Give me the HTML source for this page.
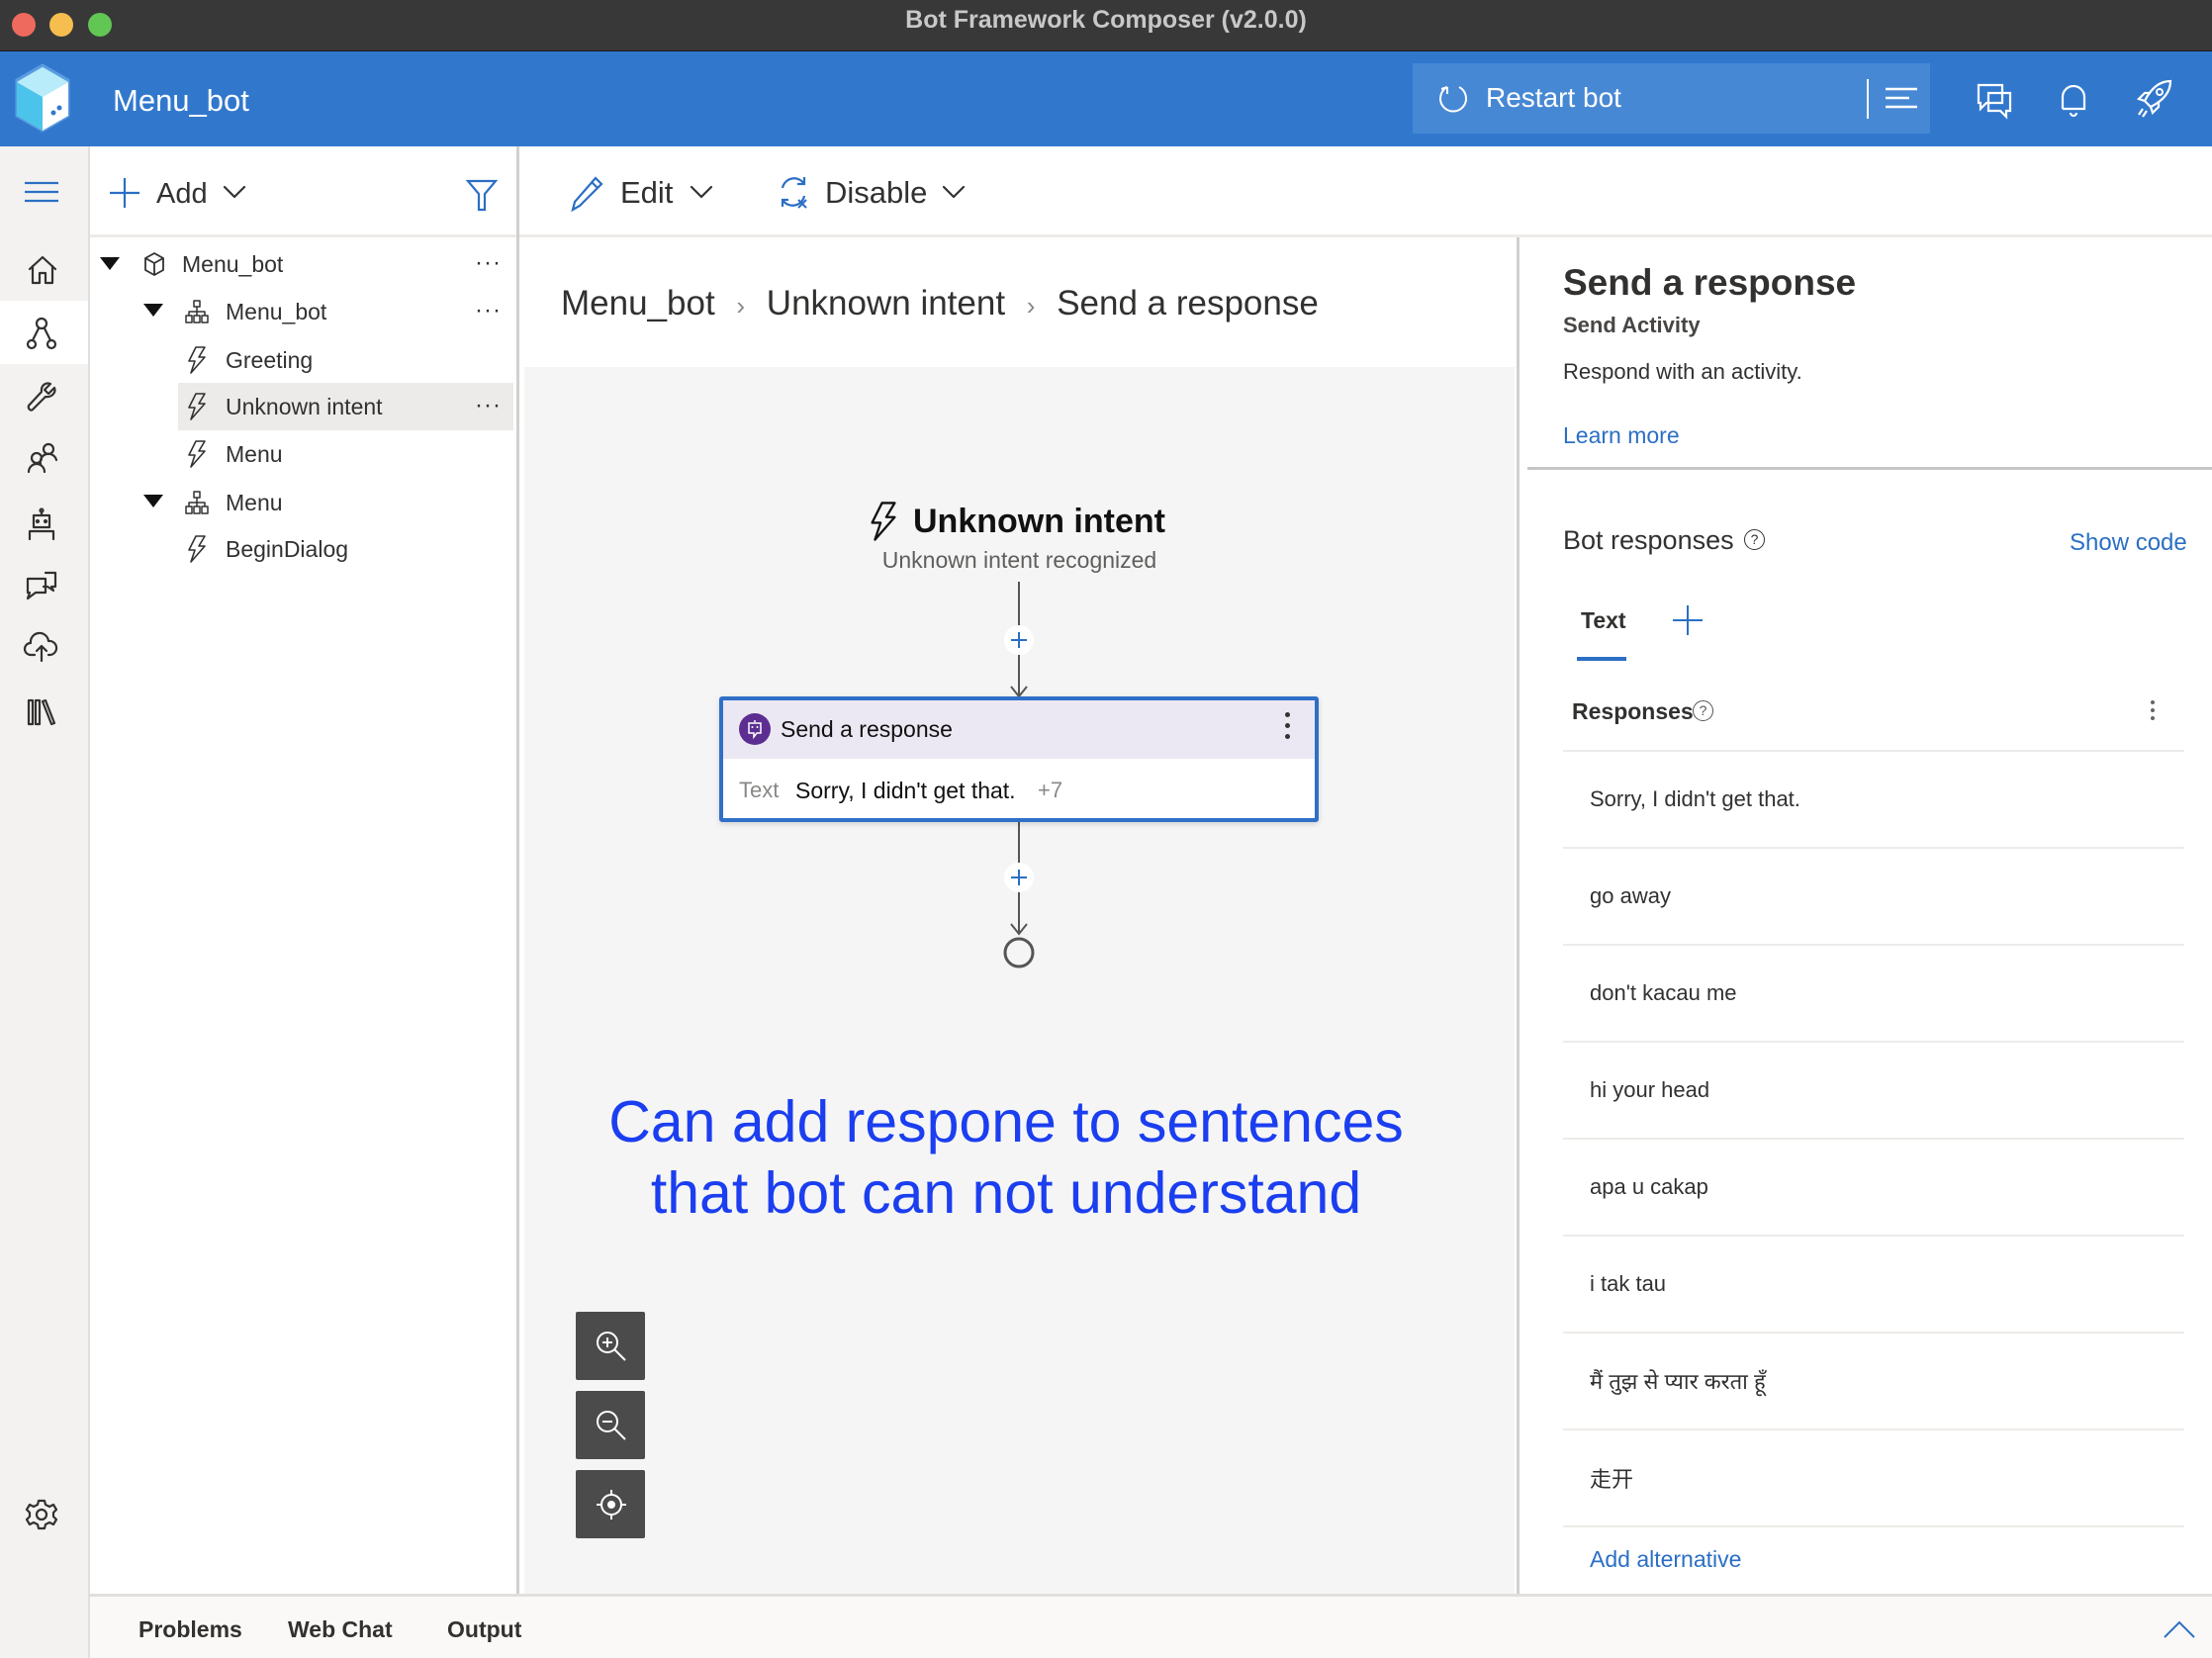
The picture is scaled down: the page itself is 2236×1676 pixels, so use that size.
<!DOCTYPE html>
<html><head><meta charset="utf-8">
<style>
*{margin:0;padding:0;box-sizing:border-box}
body{width:2236px;height:1676px;position:relative;overflow:hidden;background:#fff;font-family:"Liberation Sans","Noto Sans CJK SC",sans-serif;color:#323130}
.a{position:absolute;white-space:nowrap}
svg{position:absolute;overflow:visible}
.ico{fill:none;stroke:#323130;stroke-width:2.2;stroke-linecap:round;stroke-linejoin:round}
.resp{position:absolute;left:1580px;width:628px;height:98px;border-bottom:2px solid #edebe9}
.resp span{position:absolute;left:27px;top:50%;transform:translateY(-50%);font-size:22px;color:#323130}
.zb{position:absolute;left:582px;width:70px;height:69px;background:#4b4b4b;border-radius:2px}
</style></head><body>
<div class="a" style="left:0;top:0;width:2236px;height:52px;background:#383838;border-bottom:1px solid #1a1a1a"></div>
<div class="a" style="left:12px;top:13px;width:24px;height:24px;border-radius:50%;background:#ee6a5e"></div>
<div class="a" style="left:50px;top:13px;width:24px;height:24px;border-radius:50%;background:#f5be4f"></div>
<div class="a" style="left:89px;top:13px;width:24px;height:24px;border-radius:50%;background:#62c655"></div>
<div class="a" style="left:0;width:2236px;top:6px;text-align:center;font-size:25px;font-weight:bold;color:#c8c8c8">Bot Framework Composer (v2.0.0)</div>
<div class="a" style="left:0;top:52px;width:2236px;height:96px;background:#3178cd"></div>
<svg style="left:14px;top:64px" width="58" height="70" viewBox="0 0 58 70">
<polygon points="29,2 55,17 55,53 29,68 3,53 3,17" fill="#7fd3f0" stroke="#5b9be0" stroke-width="3"/>
<polygon points="29,34 55,19 55,53 29,68" fill="#fff"/>
<polygon points="3,19 29,34 29,68 3,53" fill="#4cc3ea"/>
<polygon points="3,19 29,4 55,19 29,34" fill="#b9ecfa"/>
<circle cx="40" cy="50" r="2.5" fill="#3178cd"/><circle cx="46" cy="45" r="2.5" fill="#3178cd"/>
</svg>
<div class="a" style="left:114px;top:84px;font-size:31px;color:#fff">Menu_bot</div>
<div class="a" style="left:1428px;top:64px;width:523px;height:71px;background:#4788d4"></div>
<div class="a" style="left:1887px;top:80px;width:2px;height:40px;background:#fff"></div>
<svg style="left:1453px;top:84px" width="32" height="32" viewBox="0 0 32 32"><path d="M10 4 A13 13 0 1 0 22 4" fill="none" stroke="#fff" stroke-width="2"/><path d="M10 4 L10 11 M10 4 L4 6" fill="none" stroke="#fff" stroke-width="2"/></svg>
<div class="a" style="left:1502px;top:83px;font-size:28px;color:#fff">Restart bot</div>
<svg style="left:1906px;top:88px" width="32" height="24"><path d="M0 2H32M0 11H24M0 20H32" stroke="#fff" stroke-width="2.5" fill="none"/></svg>
<svg style="left:1998px;top:84px" width="36" height="34" viewBox="0 0 36 34"><path d="M2 2H26V20H10L4 26V20H2Z M12 10H34V28H30V34L24 28H12Z" stroke="#fff" fill="none" stroke-width="2.2"/></svg>
<svg style="left:2081px;top:82px" width="30" height="38" viewBox="0 0 30 38"><path d="M4 28V16A11 11 0 0 1 26 16V28H4M12 32A3 3 0 0 0 18 32" stroke="#fff" fill="none" stroke-width="2.2"/></svg>
<svg style="left:2158px;top:80px" width="38" height="40" viewBox="0 0 38 40"><path d="M36 2C24 2 16 10 10 22L16 28C28 22 36 14 36 2Z M10 22L4 20L10 14H16 M16 28L18 34L24 28V22 M8 30L4 36M12 32L8 38" stroke="#fff" fill="none" stroke-width="2.2"/><circle cx="25" cy="13" r="3" stroke="#fff" fill="none" stroke-width="2"/></svg>
<div class="a" style="left:0;top:148px;width:91px;height:1528px;background:#f3f2f1;border-right:2px solid #e1dfdd"></div>
<div class="a" style="left:0;top:304px;width:89px;height:64px;background:#fff"></div>
<svg style="left:25px;top:183px" width="34" height="22"><path d="M0 2H34M0 11H34M0 20H34" stroke="#2b6fc4" stroke-width="2.2"/></svg>
<svg class="ico" style="left:28px;top:258px" width="30" height="30" viewBox="0 0 30 30"><path d="M2 14L15 2L28 14M5 11V28H12V18H18V28H25V11"/></svg>
<svg class="ico" style="left:26px;top:320px" width="32" height="34" viewBox="0 0 32 34"><circle cx="16" cy="7" r="5"/><circle cx="6" cy="28" r="4"/><circle cx="26" cy="28" r="4"/><path d="M13 12L7 24M19 12L25 24"/></svg>
<svg class="ico" style="left:27px;top:386px" width="30" height="30" viewBox="0 0 30 30"><path d="M28 6L22 12L18 8L24 2C19 0 14 4 15 10L2 24C1 27 4 30 6 28L19 15C25 16 30 11 28 6Z"/></svg>
<svg class="ico" style="left:27px;top:447px" width="32" height="30" viewBox="0 0 32 30"><circle cx="22" cy="7" r="5"/><path d="M14 22A8 8 0 0 1 30 18"/><circle cx="10" cy="16" r="5"/><path d="M2 30A8 8 0 0 1 18 30"/></svg>
<svg class="ico" style="left:28px;top:513px" width="28" height="32" viewBox="0 0 28 32"><circle cx="14" cy="3" r="1.5"/><path d="M14 5V8M6 8H22V20H6Z M2 32V24H26V32"/><circle cx="10" cy="14" r="1"/><circle cx="18" cy="14" r="1"/></svg>
<svg class="ico" style="left:26px;top:577px" width="32" height="30" viewBox="0 0 32 30"><path d="M20 2H30V16H26L28 20L22 16H18 M4 8H20V22H10L2 28L4 22H2V8Z"/></svg>
<svg class="ico" style="left:25px;top:642px" width="34" height="26" viewBox="0 0 34 26"><path d="M10 20H6A6 6 0 0 1 6 8A9 9 0 0 1 24 6A7 7 0 0 1 26 20H24M17 26V12M12 16L17 11L22 16"/></svg>
<svg class="ico" style="left:27px;top:706px" width="30" height="28" viewBox="0 0 30 28"><path d="M2 2H6V26H2Z M9 2H13V26H9Z M16 3L19 2L28 25L25 26Z"/></svg>
<svg class="ico" style="left:26px;top:1515px" width="32" height="32" viewBox="0 0 32 32"><circle cx="16" cy="16" r="5"/><path d="M13 2H19L20 6L24 8L28 6L31 11L28 14V18L31 21L28 26L24 24L20 26L19 30H13L12 26L8 24L4 26L1 21L4 18V14L1 11L4 6L8 8L12 6Z"/></svg>
<div class="a" style="left:91px;top:148px;width:431px;height:92px;border-bottom:3px solid #edebe9"></div>
<div class="a" style="left:522px;top:148px;width:3px;height:1463px;background:#d2d0ce"></div>
<svg style="left:111px;top:180px" width="30" height="30"><path d="M15 0V30M0 15H30" stroke="#2b6fc4" stroke-width="2.2"/></svg>
<div class="a" style="left:158px;top:180px;font-size:29px">Add</div>
<svg class="ico" style="left:226px;top:188px" width="22" height="12"><path d="M1 1L11 11L21 1"/></svg>
<svg style="left:472px;top:182px" width="30" height="32"><path d="M1 1H29L18 14V30H12V14Z" fill="none" stroke="#2b6fc4" stroke-width="2.2"/></svg>
<div class="a" style="left:180px;top:387px;width:339px;height:48px;background:#edebe9"></div>
<svg style="left:101px;top:260px" width="20" height="14"><path d="M0 0H20L10 13Z" fill="#111"/></svg>
<svg style="left:145px;top:307px" width="20" height="14"><path d="M0 0H20L10 13Z" fill="#111"/></svg>
<svg style="left:145px;top:500px" width="20" height="14"><path d="M0 0H20L10 13Z" fill="#111"/></svg>
<svg class="ico" style="left:146px;top:255px" width="20" height="24" viewBox="0 0 20 24"><path d="M10 1L19 6V18L10 23L1 18V6Z M1 6L10 11L19 6M10 11V23" stroke-width="1.8"/></svg>
<svg class="ico" style="left:187px;top:303px" width="24" height="24" viewBox="0 0 24 24"><path d="M9 1H15V7H9Z M12 7V12M4 12H20M4 12V16M20 12V16M12 12V16 M1 16H7V23H1Z M9 16H15V23H9Z M17 16H23V23H17Z" stroke-width="1.5"/></svg>
<svg class="ico" style="left:187px;top:496px" width="24" height="24" viewBox="0 0 24 24"><path d="M9 1H15V7H9Z M12 7V12M4 12H20M4 12V16M20 12V16M12 12V16 M1 16H7V23H1Z M9 16H15V23H9Z M17 16H23V23H17Z" stroke-width="1.5"/></svg>
<svg class="ico" style="left:190px;top:350px" width="18" height="28" viewBox="0 0 18 28"><path d="M8 1H17L11 11H17L3 27L7 15H1Z" stroke-width="1.6"/></svg>
<svg class="ico" style="left:190px;top:397px" width="18" height="28" viewBox="0 0 18 28"><path d="M8 1H17L11 11H17L3 27L7 15H1Z" stroke-width="1.6"/></svg>
<svg class="ico" style="left:190px;top:445px" width="18" height="28" viewBox="0 0 18 28"><path d="M8 1H17L11 11H17L3 27L7 15H1Z" stroke-width="1.6"/></svg>
<svg class="ico" style="left:190px;top:541px" width="18" height="28" viewBox="0 0 18 28"><path d="M8 1H17L11 11H17L3 27L7 15H1Z" stroke-width="1.6"/></svg>
<div class="a" style="left:184px;top:254px;font-size:23px">Menu_bot</div>
<div class="a" style="left:228px;top:302px;font-size:23px">Menu_bot</div>
<div class="a" style="left:228px;top:351px;font-size:23px">Greeting</div>
<div class="a" style="left:228px;top:398px;font-size:23px">Unknown intent</div>
<div class="a" style="left:228px;top:446px;font-size:23px">Menu</div>
<div class="a" style="left:228px;top:495px;font-size:23px">Menu</div>
<div class="a" style="left:228px;top:542px;font-size:23px">BeginDialog</div>
<div class="a" style="left:480px;top:252px;font-size:24px;letter-spacing:1px">···</div>
<div class="a" style="left:480px;top:300px;font-size:24px;letter-spacing:1px">···</div>
<div class="a" style="left:480px;top:396px;font-size:24px;letter-spacing:1px">···</div>
<div class="a" style="left:525px;top:237px;width:1711px;height:3px;background:#edebe9"></div>
<svg style="left:578px;top:178px" width="32" height="36" viewBox="0 0 32 36"><path d="M24 2L30 8L8 30L1 34L3 26Z M20 6L26 12" fill="none" stroke="#2b6fc4" stroke-width="2.2"/></svg>
<div class="a" style="left:627px;top:177px;font-size:31px">Edit</div>
<svg class="ico" style="left:698px;top:188px" width="22" height="12"><path d="M1 1L11 11L21 1"/></svg>
<svg style="left:785px;top:176px" width="34" height="36" viewBox="0 0 34 36"><path d="M6 14A12 12 0 0 1 28 10M28 3V10H21 M28 22A12 12 0 0 1 6 26M6 33V26H12" fill="none" stroke="#2b6fc4" stroke-width="2.2"/><path d="M22 26L30 34M30 26L22 34" stroke="#2b6fc4" stroke-width="2"/></svg>
<div class="a" style="left:834px;top:177px;font-size:31px">Disable</div>
<svg class="ico" style="left:953px;top:188px" width="22" height="12"><path d="M1 1L11 11L21 1"/></svg>
<div class="a" style="left:567px;top:287px;font-size:35px;color:#323130">Menu_bot <span style="font-size:26px;color:#888;margin:0 12px">›</span> Unknown intent <span style="font-size:26px;color:#888;margin:0 12px">›</span> Send a response</div>
<div class="a" style="left:530px;top:371px;width:1001px;height:1240px;background:#f5f5f5"></div>
<svg class="ico" style="left:880px;top:507px" width="26" height="40" viewBox="0 0 18 28"><path d="M8 1H17L11 11H17L3 27L7 15H1Z" stroke="#111" stroke-width="1.6"/></svg>
<div class="a" style="left:923px;top:508px;font-size:34px;font-weight:bold;color:#111">Unknown intent</div>
<div class="a" style="left:530px;width:1001px;text-align:center;top:553px;font-size:23px;color:#605e5c">Unknown intent recognized</div>
<svg style="left:1000px;top:588px" width="60" height="400" viewBox="0 0 60 400">
<path d="M30 0V116M22 106L30 116L38 106 M30 242V356M22 346L30 356L38 346" stroke="#555" stroke-width="2" fill="none"/>
<circle cx="30" cy="59" r="15" fill="#fff"/><path d="M30 51V67M22 59H38" stroke="#2b6fc4" stroke-width="2"/>
<circle cx="30" cy="299" r="15" fill="#fff"/><path d="M30 291V307M22 299H38" stroke="#2b6fc4" stroke-width="2"/>
<circle cx="30" cy="375" r="14" fill="none" stroke="#555" stroke-width="3"/>
</svg>
<div class="a" style="left:727px;top:704px;width:606px;height:127px;border:4px solid #2f6fc7;border-radius:3px;background:#fff;box-shadow:0 2px 6px rgba(0,0,0,.15)"></div>
<div class="a" style="left:731px;top:708px;width:598px;height:59px;background:#ebe8f3"></div>
<div class="a" style="left:747px;top:721px;width:32px;height:32px;border-radius:50%;background:#5c2e91"></div>
<svg style="left:754px;top:727px" width="18" height="20" viewBox="0 0 18 20"><path d="M9 1V3M3 4H15V14H11L8 18V14H3Z" stroke="#fff" fill="none" stroke-width="1.5"/><circle cx="6.5" cy="8" r="1" fill="#fff"/><circle cx="11.5" cy="8" r="1" fill="#fff"/></svg>
<div class="a" style="left:789px;top:724px;font-size:23px;color:#111">Send a response</div>
<div class="a" style="left:1299px;top:720px;width:5px;height:5px;border-radius:50%;background:#333;box-shadow:0 11px 0 #333,0 22px 0 #333"></div>
<div class="a" style="left:747px;top:786px;font-size:22px;color:#8a8886">Text</div>
<div class="a" style="left:804px;top:786px;font-size:23px;color:#111">Sorry, I didn't get that.</div>
<div class="a" style="left:1049px;top:786px;font-size:22px;color:#8a8886">+7</div>
<div class="a" style="left:517px;width:1000px;text-align:center;top:1098px;font-size:59px;line-height:72px;color:#1b3ef0;white-space:normal">Can add respone to sentences<br>that bot can not understand</div>
<div class="zb" style="top:1326px"></div><div class="zb" style="top:1406px"></div><div class="zb" style="top:1486px"></div>
<svg style="left:600px;top:1343px" width="36" height="36" viewBox="0 0 36 36"><circle cx="14" cy="14" r="10" fill="none" stroke="#fff" stroke-width="2"/><path d="M21 21L32 32M14 9V19M9 14H19" stroke="#fff" stroke-width="2"/></svg>
<svg style="left:600px;top:1423px" width="36" height="36" viewBox="0 0 36 36"><circle cx="14" cy="14" r="10" fill="none" stroke="#fff" stroke-width="2"/><path d="M21 21L32 32M9 14H19" stroke="#fff" stroke-width="2"/></svg>
<svg style="left:601px;top:1504px" width="34" height="34" viewBox="0 0 34 34"><circle cx="17" cy="17" r="10" fill="none" stroke="#fff" stroke-width="2"/><circle cx="17" cy="17" r="4" fill="#fff"/><path d="M17 2V7M17 27V32M2 17H7M27 17H32" stroke="#fff" stroke-width="2"/></svg>
<div class="a" style="left:1533px;top:240px;width:3px;height:1371px;background:#d2d0ce"></div>
<div class="a" style="left:1580px;top:265px;font-size:37px;font-weight:bold;color:#323130">Send a response</div>
<div class="a" style="left:1580px;top:316px;font-size:22px;font-weight:bold;color:#484644">Send Activity</div>
<div class="a" style="left:1580px;top:363px;font-size:22px">Respond with an activity.</div>
<div class="a" style="left:1580px;top:427px;font-size:23px;color:#2b6fc4">Learn more</div>
<div class="a" style="left:1544px;top:472px;width:692px;height:3px;background:#c8c6c4"></div>
<div class="a" style="left:1580px;top:531px;font-size:27px">Bot responses</div>
<div class="a" style="left:1763px;top:535px;width:21px;height:21px;border:1.5px solid #333;border-radius:50%;font-size:14px;text-align:center;line-height:18px">?</div>
<div class="a" style="left:2092px;top:535px;font-size:24px;color:#2b6fc4">Show code</div>
<div class="a" style="left:1598px;top:614px;font-size:23px;font-weight:bold;color:#323130">Text</div>
<div class="a" style="left:1594px;top:664px;width:50px;height:4px;background:#2b6fc4"></div>
<svg style="left:1691px;top:612px" width="30" height="30"><path d="M15 0V30M0 15H30" stroke="#2b6fc4" stroke-width="2"/></svg>
<div class="a" style="left:1589px;top:706px;font-size:23px;font-weight:bold">Responses</div>
<div class="a" style="left:1711px;top:708px;width:21px;height:21px;border:1.5px solid #555;border-radius:50%;font-size:14px;text-align:center;line-height:18px;color:#555">?</div>
<div class="a" style="left:2174px;top:708px;width:4px;height:4px;border-radius:50%;background:#666;box-shadow:0 8px 0 #666,0 16px 0 #666"></div>
<div class="a" style="left:1580px;top:758px;width:628px;height:2px;background:#edebe9"></div>
<div class="resp" style="top:760px"><span>Sorry, I didn't get that.</span></div>
<div class="resp" style="top:858px"><span>go away</span></div>
<div class="resp" style="top:956px"><span>don't kacau me</span></div>
<div class="resp" style="top:1054px"><span>hi your head</span></div>
<div class="resp" style="top:1152px"><span>apa u cakap</span></div>
<div class="resp" style="top:1250px"><span>i tak tau</span></div>
<div class="resp" style="top:1348px"><span>मैं तुझ से प्यार करता हूँ</span></div>
<div class="resp" style="top:1446px"><span>走开</span></div>
<div class="a" style="left:1607px;top:1563px;font-size:23px;color:#2b6fc4">Add alternative</div>
<div class="a" style="left:91px;top:1611px;width:2145px;height:65px;background:#faf9f8;border-top:3px solid #e1dfdd"></div>
<div class="a" style="left:140px;top:1634px;font-size:23px;font-weight:bold;color:#323130">Problems</div>
<div class="a" style="left:291px;top:1634px;font-size:23px;font-weight:bold;color:#323130">Web Chat</div>
<div class="a" style="left:452px;top:1634px;font-size:23px;font-weight:bold;color:#323130">Output</div>
<svg style="left:2187px;top:1638px" width="32" height="18"><path d="M1 17L16 2L31 17" stroke="#2b6fc4" stroke-width="2" fill="none"/></svg>
</body></html>
